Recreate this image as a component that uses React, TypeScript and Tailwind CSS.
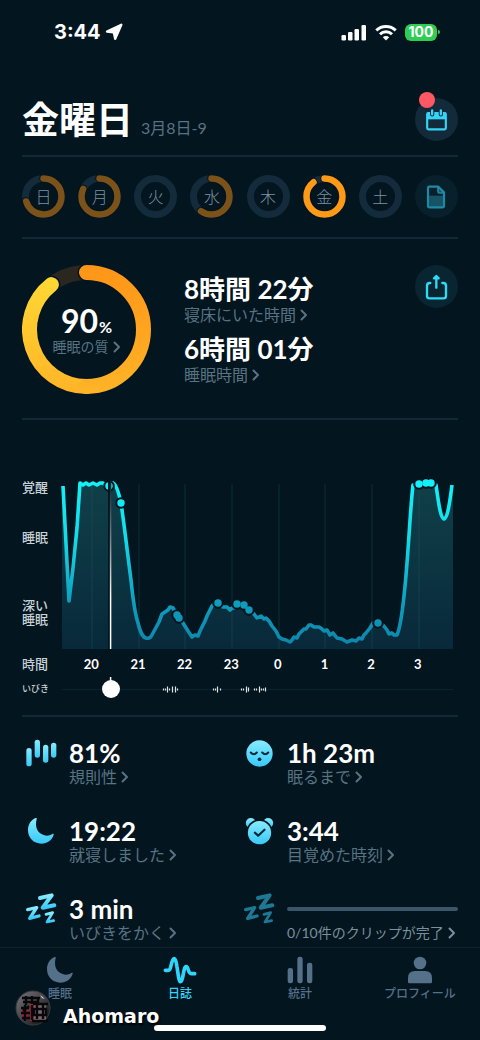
import { useState } from "react"
import type React from "react"

const days = [
  { label: "日", progress: 0.705 },
  { label: "月", progress: 0.82 },
  { label: "火", progress: 0 },
  { label: "水", progress: 0.6 },
  { label: "木", progress: 0 },
  { label: "金", progress: 0.895, active: true },
  { label: "土", progress: 0 },
]

const hours = ["20", "21", "22", "23", "0", "1", "2", "3"]
const gridLines = [30, 77, 123, 170, 217, 263, 310, 357]

const sleepCurve =
  "M1 6 L7 121 L11 88 L15 48 L18 3 L21 5 L24 3 L27 5 L31 3 L35 5 L38 3 L41 3 L44 6 L47 6 L51 3 C54 4 57 14 59 23 C63 50 66 78 69 100 C71 120 73 134 76 143 C78 151 80 157 84 158 C88 159 89 157 91 153 L97 142 L100 134 L103 132 L106 130 L108 127 L111 128 L115 135 L117 138 L121 143 L126 151 L130 157 L133 155 L136 156 L138 151 L140 147 L143 141 L145 136 L150 126 C152 123 154 123 156 123 L161 127 L165 127 L168 130 L170 128 L172 128 L175 124 L182 125 L187 130 L192 134 L195 138 L199 136 L202 139 L204 138 L207 141 L210 146 L214 151 L217 157 L220 159 L224 160 L228 162 L230 160 L232 157 L235 158 L237 154 L239 152 L242 149 L244 149 L247 145 L249 145 L252 147 L257 147 L260 149 L262 151 L265 150 L268 155 L271 153 L275 158 L280 159 L285 162 L290 160 L294 161 L297 158 L300 159 L302 155 L304 153 L308 148 L311 143 L316 142 L321 145 L325 150 L327 154 L330 153 L332 155 L335 155 C338 148 340 135 342 116 C346 82 348 30 351 5 L357 4 L364 3 L369 3 L374 5 C376 18 378 38 382 39 C386 38 388 20 390 5"

const clips = [
  [47, 6],
  [59, 23],
  [115, 135],
  [117, 138],
  [156, 123],
  [175, 124],
  [182, 125],
  [187, 130],
  [316, 143],
  [357, 4],
  [364, 3],
  [369, 3],
]

// x position and half height of every snore bar
const snores = [
  [101, 1], [103, 1], [105, 3], [107, 1], [110, 3], [113, 3], [115, 1],
  [151, 1], [153, 1], [155, 3], [158, 1],
  [179, 1], [181, 1], [184, 3], [186, 2],
  [192, 1], [194, 1], [197, 3], [199, 1], [201, 1], [203, 2],
]

const Chevron: React.FC = () => (
  <svg className="h-3 w-2 shrink-0" viewBox="0 0 8 12" fill="none" stroke="currentColor" strokeWidth="2" aria-hidden="true">
    <path d="M1.5 1.5 L6 6 L1.5 10.5" strokeLinecap="round" strokeLinejoin="round" />
  </svg>
)

const StatusBar: React.FC = () => (
  <div className="flex h-16 items-center justify-between pr-10 pl-[54px]">
    <div className="flex items-center gap-1 font-['Inter',sans-serif] text-xl font-bold">
      3:44
      <svg className="h-[18px] w-[18px]" viewBox="0 0 18 18" fill="#fff" stroke="#fff" strokeWidth="2.400" strokeLinejoin="round" aria-hidden="true">
        <path d="M16.300 1.800 L10.200 15.800 L9 10 Q8.900 9.400 8.300 9.300 L2 8.500 Z" />
      </svg>
    </div>
    <div className="flex items-center gap-2">
      <svg className="h-[17px] w-[26px]" viewBox="0 0 26 17" fill="#fff" aria-hidden="true">
        <rect x="0.500" y="11" width="4.500" height="5.500" rx="1.200" />
        <rect x="7" y="8" width="4.500" height="8.500" rx="1.200" />
        <rect x="13.500" y="5" width="4.500" height="11.500" rx="1.200" />
        <rect x="20.500" y="1" width="4.500" height="15.500" rx="1.200" />
      </svg>
      <svg className="h-[17px] w-[22px]" viewBox="0 0 22 17" fill="none" stroke="#fff" strokeWidth="3" aria-hidden="true">
        <path d="M1.300 6.300 A14 14 0 0 1 20.700 6.300" />
        <path d="M5 10.300 A8.600 8.600 0 0 1 17 10.300" />
        <path d="M11 16.500 L7.800 13.300 A4.600 4.600 0 0 1 14.200 13.300 Z" fill="#fff" stroke="none" />
      </svg>
      <div className="flex items-center gap-px">
        <span className="flex h-[17px] w-8 items-center justify-center rounded-md bg-[#30cd54] font-['Inter',sans-serif] text-sm font-bold">
          100
        </span>
        <span className="h-1 w-0.5 rounded-r bg-[#30cd54]" />
      </div>
    </div>
  </div>
)

const Header: React.FC = () => (
  <header className="flex items-center justify-between border-b-2 border-[#132835] pt-[34px] pb-[14px]">
    <div className="flex items-baseline gap-2">
      <h1 className="text-[37px] leading-[43px] font-bold">金曜日</h1>
      <span className="text-base text-[#587382]">3月8日-9</span>
    </div>
    <button type="button" aria-label="カレンダー" className="relative flex h-[43px] w-[43px] items-center justify-center rounded-full bg-[#122a39]">
      <svg className="h-[22px] w-[23px]" viewBox="0 0 68 66" aria-hidden="true">
        <rect x="6" y="12" width="56" height="49" rx="4" fill="none" stroke="#35d3f5" strokeWidth="6.500" />
        <path d="M6 10 H62 V31 H6 Z" fill="#35d3f5" />
        <path d="M21 6 V16 M47 6 V16" stroke="#122a39" strokeWidth="13" strokeLinecap="round" />
        <path d="M21 4 V16 M47 4 V16" stroke="#35d3f5" strokeWidth="7" strokeLinecap="round" />
      </svg>
      <span className="absolute -top-1.5 left-1 h-4 w-4 rounded-full bg-[#ff5865]" />
    </button>
  </header>
)

const DayRing: React.FC<{ label: string; progress: number; active?: boolean }> = ({ label, progress, active }) => (
  <button type="button" className="relative flex h-[43px] w-[43px] items-center justify-center">
    <svg className="absolute inset-0 h-full w-full -rotate-90" viewBox="0 0 43 43" fill="none" aria-hidden="true">
      <circle cx="21.500" cy="21.500" r="18" stroke="#132b3b" strokeWidth="7" />
      {progress > 0 && (
        <>
          <circle cx="21.500" cy="21.500" r="18" pathLength="1" stroke="#04131d" strokeWidth="8.500" strokeLinecap="round" strokeDasharray={`${progress} 1`} />
          <circle cx="21.500" cy="21.500" r="18" pathLength="1" stroke={active ? "#ff9a18" : "#7b5219"} strokeWidth="6.500" strokeLinecap="round" strokeDasharray={`${progress} 1`} />
        </>
      )}
    </svg>
    <span className="text-base leading-5 font-light text-[#7a93a1]">{label}</span>
  </button>
)

const WeekRow: React.FC = () => (
  <div className="flex items-center justify-between border-b-2 border-[#132835] pt-[18px] pb-[19px]">
    {days.map((day) => (
      <DayRing key={day.label} {...day} />
    ))}
    <button type="button" aria-label="メモ" className="flex h-[43px] w-[43px] items-center justify-center rounded-full bg-[#08202c]">
      <svg className="h-6 w-5" viewBox="0 0 60 72" aria-hidden="true">
        <path d="M6 32 H54 V67 H6 Z" fill="#155365" />
        <path d="M10 5 H37 L54 22 V62 Q54 67 49 67 H11 Q6 67 6 62 V9 Q6 5 10 5 Z" fill="none" stroke="#2188a5" strokeWidth="6.500" strokeLinejoin="round" />
        <path d="M36 5 V19 Q36 24 41 24 H54 Z" fill="#155365" stroke="#2188a5" strokeWidth="5" strokeLinejoin="round" />
      </svg>
    </button>
  </div>
)

const Summary: React.FC = () => (
  <section className="flex items-start border-b-2 border-[#132835] pt-[26px] pb-6">
    <a href="#quality" className="relative flex h-[129px] w-[129px] shrink-0 flex-col items-center justify-center">
      <svg className="absolute inset-0 h-full w-full" viewBox="0 0 129 129" fill="none" aria-hidden="true">
        <defs>
          <linearGradient id="ringRight" gradientUnits="userSpaceOnUse" x1="64" y1="0" x2="64" y2="129">
            <stop offset="0" stopColor="#ff9518" />
            <stop offset="1" stopColor="#ffb427" />
          </linearGradient>
          <linearGradient id="ringLeft" gradientUnits="userSpaceOnUse" x1="64" y1="129" x2="64" y2="10">
            <stop offset="0" stopColor="#ffb427" />
            <stop offset="1" stopColor="#ffd934" />
          </linearGradient>
        </defs>
        <circle cx="64.500" cy="64.500" r="57" stroke="#2a2620" strokeWidth="15" />
        <path d="M64.500 7.500 A57 57 0 1 1 29.400 19.600" stroke="#03141e" strokeWidth="18" strokeLinecap="round" />
        <path d="M64.500 121.500 A57 57 0 0 1 29.400 19.600" stroke="url(#ringLeft)" strokeWidth="15" strokeLinecap="round" />
        <path d="M64.500 7.500 A57 57 0 0 1 64.500 121.500" stroke="url(#ringRight)" strokeWidth="15" strokeLinecap="round" />
      </svg>
      <span className="flex items-baseline gap-px text-[32px] leading-8 font-bold">
        90<span className="text-base">%</span>
      </span>
      <span className="flex items-center gap-1 text-sm leading-4 text-[#587382]">
        睡眠の質 <Chevron />
      </span>
    </a>
    <div className="flex flex-1 flex-col gap-2 pt-2 pl-[33px]">
      <SummaryItem value="8時間 22分" label="寝床にいた時間" />
      <SummaryItem value="6時間 01分" label="睡眠時間" />
    </div>
    <button type="button" aria-label="共有" className="flex h-[43px] w-[43px] items-center justify-center rounded-full bg-[#0a2532]">
      <svg className="h-[26px] w-[23px]" viewBox="0 0 69 78" fill="none" stroke="#2cdcf6" strokeWidth="7" strokeLinecap="round" strokeLinejoin="round" aria-hidden="true">
        <path d="M16 27 H14 Q6 27 6 36 V65 Q6 73 14 73 H55 Q63 73 63 65 V36 Q63 27 55 27 H52" />
        <path d="M34 41 V10 M27 13 L34 6 L41 13 Z" />
      </svg>
    </button>
  </section>
)

const SummaryItem: React.FC<{ value: string; label: string }> = ({ value, label }) => (
  <a href="#time" className="flex flex-col">
    <span className="text-[26px] leading-8 font-bold">{value}</span>
    <span className="flex items-center gap-1 text-base leading-5 text-[#587382]">
      {label} <Chevron />
    </span>
  </a>
)

const SleepChart: React.FC = () => {
  const [position, setPosition] = useState(106)
  const cursor = 9 + (position / 1000) * 373

  return (
    <section className="border-b-2 border-[#132835] pt-[60px] pr-[5px] pb-[17px]">
      <div className="flex">
        <div className="flex w-10 shrink-0 flex-col text-[13px] leading-[14px] font-medium text-[#c9d2d7]">
          <span>覚醒</span>
          <span className="mt-9">睡眠</span>
          <span className="mt-[54px]">
            深い
            <br />
            睡眠
          </span>
        </div>
        <svg className="h-auto min-w-0 flex-1 overflow-visible" viewBox="0 0 391 170" fill="none" role="img" aria-label="睡眠グラフ">
          <defs>
            <linearGradient id="curve" gradientUnits="userSpaceOnUse" x1="0" y1="0" x2="0" y2="165">
              <stop offset="0" stopColor="#12f2fb" />
              <stop offset=".35" stopColor="#12dce9" />
              <stop offset=".75" stopColor="#0e9dbd" />
              <stop offset="1" stopColor="#0d86ab" />
            </linearGradient>
            <linearGradient id="area" gradientUnits="userSpaceOnUse" x1="0" y1="0" x2="0" y2="169">
              <stop offset="0" stopColor="#104049" />
              <stop offset="1" stopColor="#08293a" />
            </linearGradient>
            <linearGradient id="cursor" gradientUnits="userSpaceOnUse" x1="0" y1="0" x2="0" y2="169">
              <stop offset="0" stopColor="#06202a" />
              <stop offset=".35" stopColor="#75878d" />
              <stop offset=".7" stopColor="#fff" />
            </linearGradient>
          </defs>
          <path d={`${sleepCurve} L391 5 V169 H0 V6 Z`} fill="url(#area)" />
          {gridLines.map((x) => (
            <path key={x} d={`M${x} 4 V169`} stroke="#1d5963" strokeOpacity=".4" />
          ))}
          <path d={sleepCurve} stroke="url(#curve)" strokeWidth="3.600" strokeLinejoin="round" />
          {clips.map(([x, y]) => (
            <circle key={x} cx={x} cy={y} r="5.800" fill="#04141e" />
          ))}
          {clips.map(([x, y]) => (
            <circle key={x} cx={x} cy={y} r="3.700" fill="url(#curve)" />
          ))}
          <path d={`M${cursor - 1.500} 0 V169`} stroke="#04141e" strokeWidth="2" />
          <rect x={cursor - 0.7} y="0" width="1.500" height="169" fill="url(#cursor)" />
        </svg>
      </div>
      <div className="flex h-[30px] items-center text-[13px]">
        <span className="w-10 shrink-0 font-medium text-[#c9d2d7]">時間</span>
        <div className="flex flex-1 pr-3 pl-1.5 font-bold">
          {hours.map((hour) => (
            <span key={hour} className="flex-1 text-center">
              {hour}
            </span>
          ))}
        </div>
      </div>
      <div className="flex h-[18px] items-center">
        <label htmlFor="snore" className="w-10 shrink-0 text-[9px] font-medium text-[#c9d2d7]">
          いびき
        </label>
        <div className="grid flex-1">
          <svg className="h-[18px] w-full overflow-visible [grid-area:1/1]" viewBox="0 0 391 18" aria-hidden="true">
            <path d="M0 9.500 H391" stroke="#082430" />
            {snores.map(([x, h]) => (
              <path key={x} d={`M${x + 0.5} ${9.500 - h} V${9.500 + h}`} stroke="#dfe6e9" strokeWidth="1.200" />
            ))}
            <rect x={cursor - 0.7} y="-3" width="1.500" height="6" fill="#fff" />
          </svg>
          <input
            id="snore"
            type="range"
            min={0}
            max={1000}
            value={position}
            onChange={(e) => setPosition(Number(e.target.value))}
            className="m-0 h-[18px] w-full appearance-none bg-transparent [grid-area:1/1] [&::-webkit-slider-thumb]:h-[18px] [&::-webkit-slider-thumb]:w-[18px] [&::-webkit-slider-thumb]:appearance-none [&::-webkit-slider-thumb]:rounded-full [&::-webkit-slider-thumb]:bg-white"
          />
        </div>
      </div>
    </section>
  )
}

const RegularityIcon: React.FC = () => (
  <svg className="h-7 w-8" viewBox="0 0 96 84" fill="url(#ice)" aria-hidden="true">
    <rect x="4" y="27" width="16" height="55" rx="8" />
    <rect x="29" y="2" width="16" height="54" rx="8" />
    <rect x="54" y="17" width="16" height="54" rx="8" />
    <rect x="78" y="11" width="16" height="45" rx="8" />
  </svg>
)

const MoonIcon: React.FC<{ fill: string }> = ({ fill }) => (
  <svg className="h-7 w-7" viewBox="0 0 84 84" fill={fill} aria-hidden="true">
    <path d="M26 3 C11 9 3 23 3 40 C3 63 20 80 43 80 C61 80 75 69 80 53 C81 50 79 49 76 51 C67 57 58 57 50 54 C31 48 23 30 29 6 C30 3 29 2 26 3 Z" />
  </svg>
)

const SnoreIcon: React.FC<{ stroke: string }> = ({ stroke }) => (
  <svg className="h-[34px] w-8" viewBox="0 0 96 102" fill="none" stroke={stroke} strokeLinecap="round" strokeLinejoin="round" aria-hidden="true">
    <path d="M45 18 L80 10 L53 47 L88 40" strokeWidth="12" />
    <path d="M8 53 L35 47 L14 79 L42 72" strokeWidth="10" />
    <path d="M63 67 L83 62 L66 90 L86 86" strokeWidth="8" />
  </svg>
)

const FaceIcon: React.FC = () => (
  <svg className="h-[27px] w-[27px]" viewBox="0 0 80 80" fill="none" aria-hidden="true">
    <circle cx="40" cy="40" r="39" fill="url(#ice)" />
    <path d="M14 37 Q23 47 32 37 M48 37 Q57 47 66 37" stroke="#062a3c" strokeWidth="6" strokeLinecap="round" />
    <circle cx="40" cy="57" r="5.500" fill="#062a3c" />
  </svg>
)

const AlarmIcon: React.FC = () => (
  <svg className="h-7 w-[29px]" viewBox="0 0 86 84" fill="none" aria-hidden="true">
    <circle cx="17" cy="18" r="15" fill="url(#ice)" />
    <circle cx="69" cy="18" r="15" fill="url(#ice)" />
    <circle cx="43" cy="47" r="40" fill="#03151f" />
    <circle cx="43" cy="47" r="35" fill="url(#ice)" />
    <path d="M29 47 L39 56 L58 38" stroke="#062a3c" strokeWidth="6.500" strokeLinecap="round" strokeLinejoin="round" />
  </svg>
)

const Stat: React.FC<{ icon: React.ReactNode; value: string; label: string }> = ({ icon, value, label }) => (
  <a href="#stat" className="flex gap-[9px]">
    <span className="flex h-7 w-[38px] items-center justify-center">{icon}</span>
    <span className="flex flex-col">
      <span className="text-[26px] leading-7 font-bold">{value}</span>
      <span className="flex items-center gap-1 text-base leading-5 text-[#587382]">
        {label} <Chevron />
      </span>
    </span>
  </a>
)

const Stats: React.FC = () => (
  <section className="grid grid-cols-2 gap-y-[30px] pt-[22px] pb-1">
    <Stat icon={<RegularityIcon />} value="81%" label="規則性" />
    <Stat icon={<FaceIcon />} value="1h 23m" label="眠るまで" />
    <Stat icon={<MoonIcon fill="url(#ice)" />} value="19:22" label="就寝しました" />
    <Stat icon={<AlarmIcon />} value="3:44" label="目覚めた時刻" />
    <Stat icon={<SnoreIcon stroke="url(#ice)" />} value="3 min" label="いびきをかく" />
    <a href="#clips" className="flex gap-[9px]">
      <span className="flex h-7 w-[38px] items-center justify-center">
        <SnoreIcon stroke="#1d7894" />
      </span>
      <span className="flex flex-1 flex-col">
        <span className="flex h-7 items-center">
          <span className="h-1 flex-1 rounded-full bg-[#3b5668]" />
        </span>
        <span className="flex items-center gap-1 text-sm leading-5 whitespace-nowrap text-[#7a909c]">
          0/10件のクリップが完了 <Chevron />
        </span>
      </span>
    </a>
  </section>
)

const Tab: React.FC<{ label: string; active?: boolean; children: React.ReactNode }> = ({ label, active, children }) => (
  <a href="#tab" className={`flex flex-1 flex-col items-center gap-0.5 text-xs font-medium ${active ? "text-[#2fd6fb]" : "text-[#557089]"}`}>
    <span className="flex h-7 items-center">{children}</span>
    {label}
  </a>
)

const TabBar: React.FC = () => (
  <nav className="relative mt-auto flex flex-col items-center border-t border-[#0f222d]">
    <div className="flex w-full pt-2 pb-[23px]">
      <Tab label="睡眠">
        <MoonIcon fill="currentColor" />
      </Tab>
      <Tab label="日誌" active>
        <svg className="h-7 w-[34px]" viewBox="0 0 102 84" fill="none" stroke="currentColor" strokeWidth="11" strokeLinecap="round" strokeLinejoin="round" aria-hidden="true">
          <path d="M7 43 H16 C20 43 21 40 23 33 C30 -1 38 -1 42 33 L46 59 C49 83 56 83 60 59 L63 43 C66 30 72 27 76 42 C79 52 81 53 86 53 H95" />
        </svg>
      </Tab>
      <Tab label="統計">
        <svg className="h-7 w-[26px]" viewBox="0 0 78 84" fill="currentColor" aria-hidden="true">
          <rect x="2" y="36" width="16" height="46" rx="7" />
          <rect x="31" y="2" width="16" height="80" rx="7" />
          <rect x="60" y="20" width="16" height="62" rx="7" />
        </svg>
      </Tab>
      <Tab label="プロフィール">
        <svg className="h-7 w-[26px]" viewBox="0 0 78 84" fill="currentColor" aria-hidden="true">
          <circle cx="39" cy="21" r="19" />
          <path d="M3 78 V66 Q3 45 24 45 H54 Q75 45 75 66 V78 Q75 82 71 82 H7 Q3 82 3 78 Z" />
        </svg>
      </Tab>
    </div>
    <span className="mb-[9px] h-1.5 w-[172px] rounded-full bg-white" />
    <div className="absolute bottom-3.5 left-[15px] flex items-end gap-3">
      <svg className="h-9 w-9" viewBox="0 0 36 36" fill="none" aria-hidden="true">
        <defs>
          <linearGradient id="badge" x1="0" y1="0" x2="1" y2="1">
            <stop offset="0" stopColor="#77777a" />
            <stop offset=".5" stopColor="#454347" />
            <stop offset="1" stopColor="#08090c" />
          </linearGradient>
        </defs>
        <circle cx="18" cy="18" r="17" fill="url(#badge)" stroke="#3b3d41" />
        <path d="M7 17 H13 V29 H7 Z M15 14 H20 V31 H15 Z" fill="#a81f32" />
        <path d="M19 13 H31 V30 H19 Z" fill="#77686c" />
        <path d="M7 8 H25 M8 12 H24 M11 6 V15 M17 6 V14 M23 8 V13 M6 18 H14 M6 23 H15 M7 28 H15 M10 15 V31 M14 16 L8 21 M17 15 V30 M18 14 H33 M22 14 V29 M28 14 V29 M19 19 H31 V25 H19 Z M17 31 H33" stroke="#08080a" strokeWidth="2.400" />
        <path d="M25 5 L30 9 L27 8 Z" fill="#e9eaec" />
      </svg>
      <span className="font-['DejaVu_Sans',sans-serif] text-[19px] leading-5 font-bold [text-shadow:1px_2px_2px_#000]">Ahomaro</span>
    </div>
  </nav>
)

const App: React.FC = () => {
  return (
    <div className="flex min-h-screen flex-col bg-[#03151f] font-['Lato','Noto_Sans_CJK_JP',sans-serif] text-white" lang="ja">
      <svg className="absolute h-0 w-0" aria-hidden="true">
        <defs>
          <linearGradient id="ice" x1="0" y1="0" x2="0" y2="1">
            <stop offset="0" stopColor="#87ebff" />
            <stop offset="1" stopColor="#38c9f7" />
          </linearGradient>
        </defs>
      </svg>
      <StatusBar />
      <main className="px-[22px]">
        <Header />
        <WeekRow />
        <Summary />
        <SleepChart />
        <Stats />
      </main>
      <TabBar />
    </div>
  )
}

export default App
